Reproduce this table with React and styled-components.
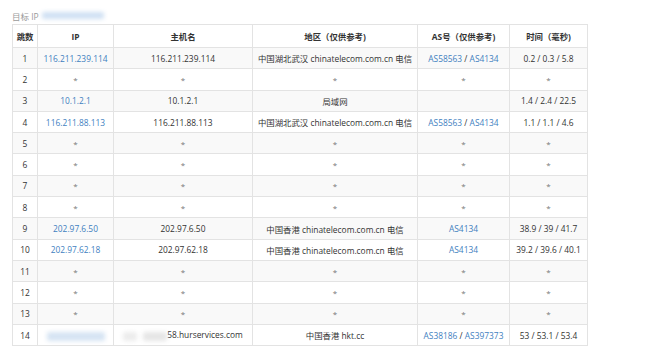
import React from "react";
import styled, { createGlobalStyle } from "styled-components";

const Global = createGlobalStyle`
  html, body { margin: 0; padding: 0; background: #fff; }
  body { font-family: "Open Sans", "Noto Sans CJK SC", sans-serif; }
`;

const Page = styled.div`
  padding: 9px 0 0 12px;
  width: 576px;
`;

const Title = styled.div`
  display: flex;
  align-items: center;
  height: 13px;
  font-size: 8.5px;
  color: #9a9a9a;
  margin-bottom: 2px;
`;

const Blur = styled.span`
  display: inline-block;
  width: ${(p) => p.$w}px;
  height: ${(p) => p.$h || 8}px;
  background: ${(p) => p.$c || "#cfe0f3"};
  filter: blur(2px);
  margin-left: ${(p) => p.$ml || 0}px;
  vertical-align: middle;
  border-radius: 2px;
`;

const Table = styled.table`
  border-collapse: collapse;
  width: 576px;
  table-layout: fixed;
  font-size: 8.4px;
  color: #333;
  font-family: "Open Sans", "Noto Sans CJK SC", sans-serif;
`;

const Th = styled.th`
  border: 1px solid #e3e3e3;
  height: 22px;
  padding: 0;
  font-weight: 700;
  text-align: center;
  background: #fff;
`;

const Tr = styled.tr`
  background: ${(p) => (p.$odd ? "#f9f9f9" : "#fff")};
`;

const Td = styled.td`
  border: 1px solid #e3e3e3;
  height: 20.3px;
  padding: 0;
  text-align: center;
  white-space: nowrap;
  overflow: hidden;
`;

const Link = styled.span`
  color: #3f7fbf;
`;

const Star = styled.span`
  color: #777;
  font-size: 8px;
`;

const cols = [25, 76, 139, 165, 92, 78];
const heads = ["跳数", "IP", "主机名", "地区（仅供参考)", "AS号（仅供参考)", "时间（毫秒)"];

const rows = [
  ["116.211.239.114", "116.211.239.114", "中国湖北武汉 chinatelecom.com.cn 电信", ["AS58563", "AS4134"], "0.2 / 0.3 / 5.8"],
  null,
  ["10.1.2.1", "10.1.2.1", "局域网", [], "1.4 / 2.4 / 22.5"],
  ["116.211.88.113", "116.211.88.113", "中国湖北武汉 chinatelecom.com.cn 电信", ["AS58563", "AS4134"], "1.1 / 1.1 / 4.6"],
  null,
  null,
  null,
  null,
  ["202.97.6.50", "202.97.6.50", "中国香港 chinatelecom.com.cn 电信", ["AS4134"], "38.9 / 39 / 41.7"],
  ["202.97.62.18", "202.97.62.18", "中国香港 chinatelecom.com.cn 电信", ["AS4134"], "39.2 / 39.6 / 40.1"],
  null,
  null,
  null,
  "last",
];

function AsList({ list }) {
  return list.map((a, i) => (
    <React.Fragment key={a}>
      {i > 0 && " / "}
      <Link>{a}</Link>
    </React.Fragment>
  ));
}

export default function App() {
  return (
    <>
      <Global />
      <Page>
        <Title>
          目标 IP
          <Blur $w={62} $h={7} $ml={3} />
        </Title>
        <Table>
          <colgroup>
            {cols.map((w, i) => (
              <col key={i} style={{ width: w }} />
            ))}
          </colgroup>
          <thead>
            <tr>
              {heads.map((h, i) => (
                <Th key={i}>{h}</Th>
              ))}
            </tr>
          </thead>
          <tbody>
            {rows.map((r, i) => {
              const n = i + 1;
              if (r === null) {
                return (
                  <Tr key={n} $odd={n % 2 === 1}>
                    <Td>{n}</Td>
                    <Td><Star>*</Star></Td>
                    <Td><Star>*</Star></Td>
                    <Td><Star>*</Star></Td>
                    <Td><Star>*</Star></Td>
                    <Td><Star>*</Star></Td>
                  </Tr>
                );
              }
              if (r === "last") {
                return (
                  <Tr key={n} $odd={false}>
                    <Td>{n}</Td>
                    <Td><Blur $w={58} $h={9} $c="#d6e4f3" /></Td>
                    <Td>
                      <Blur $w={14} $h={9} $c="#ececec" />
                      <Blur $w={24} $h={9} $c="#e6e6e6" $ml={6} />
                      58.hurservices.com
                    </Td>
                    <Td>中国香港 hkt.cc</Td>
                    <Td><AsList list={["AS38186", "AS397373"]} /></Td>
                    <Td>53 / 53.1 / 53.4</Td>
                  </Tr>
                );
              }
              return (
                <Tr key={n} $odd={n % 2 === 1}>
                  <Td>{n}</Td>
                  <Td><Link>{r[0]}</Link></Td>
                  <Td>{r[1]}</Td>
                  <Td>{r[2]}</Td>
                  <Td><AsList list={r[3]} /></Td>
                  <Td>{r[4]}</Td>
                </Tr>
              );
            })}
          </tbody>
        </Table>
      </Page>
    </>
  );
}
